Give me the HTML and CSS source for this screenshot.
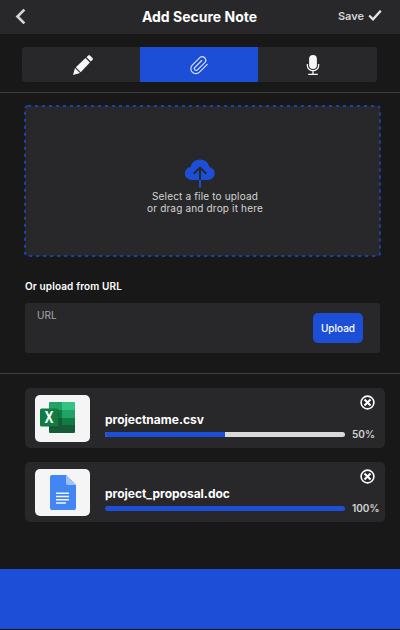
FILE: index.html
```html
<!DOCTYPE html>
<html lang="en">
<head>
<meta charset="utf-8">
<title>Add Secure Note</title>
<link rel="stylesheet" href="styles.css">
</head>
<body>
<header class="header">
  <button class="back" aria-label="Back"><svg width="11" height="18" viewBox="0 0 11 18"><path d="M9.4 1.6 2.5 8.5l6.9 6.9" fill="none" stroke="#d4d4d4" stroke-width="2.7"/></svg></button>
  <h1 class="title">Add Secure Note</h1>
  <button class="save"><span>Save</span><svg width="14" height="12" viewBox="0 0 14 12"><path d="M1.2 5.5 5 9.3l7.8-8.6" fill="none" stroke="#e5e5e5" stroke-width="2.3"/></svg></button>
</header>
<main>
  <section class="tabs-section">
    <nav class="tabs">
      <button class="tab" aria-label="Write"><svg width="22" height="22" viewBox="0 0 22 22"><g fill="#f5f5f5"><path d="M1 21 3 14.1 8 19Z"/><path d="M3.8 13.3 13.5 4.1 17.9 8.6 8.7 18.2Z"/><path d="M14.5 3.2 16.2 1.5q.9-.8 1.8.1l2.5 2.5q.9.9 0 1.8l-1.7 1.7Z"/></g></svg></button>
      <button class="tab tab-active" aria-label="Attach"><svg width="20" height="20" viewBox="0 0 20 20"><path d="m18.3 9.3-7.9 7.9a5 5 0 0 1-7.1-7.1l7.8-7.8a3.6 3.6 0 0 1 5 5l-7.6 7.6a1.8 1.8 0 0 1-2.6-2.6l6.8-6.8" fill="none" stroke="#dbe4fa" stroke-width="1.15" stroke-linecap="round" stroke-linejoin="round"/></svg></button>
      <button class="tab" aria-label="Record"><svg width="14" height="22" viewBox="0 0 14 22"><rect x="3.1" y="1" width="7.8" height="14" rx="3.9" fill="#f5f5f5"/><path d="M1.4 10v1.7a5.6 5 0 0 0 11.2 0V10M7 17v3M2.2 20.3h9.6" fill="none" stroke="#f5f5f5" stroke-width="1.3"/></svg></button>
    </nav>
  </section>
  <section class="upload-section">
    <div class="dropzone">
      <svg class="outline" width="357" height="152"><rect x="1" y="1" width="355" height="150" rx="3" fill="none" stroke="#1e40af" stroke-width="2" stroke-dasharray="3 4"/></svg>
      <svg class="cloud" width="30" height="29" viewBox="0 0 30 29"><path d="M7 21A7 6.6 0 0 1 5.6 7.9C6.4 3.5 10.2.4 15 .4c4.8 0 8.6 3.1 9.4 7.6A7 6.6 0 0 1 23 21Z" fill="#1d4ed8"/><path d="M15 21V8.6M8.7 14.9 15 8.6l6.3 6.3" fill="none" stroke="#27272a" stroke-width="2"/><path d="M15 21v7.5" stroke="#1d4ed8" stroke-width="2"/></svg>
      <p class="hint">Select a file to upload<br>or drag and drop it here</p>
    </div>
    <h2 class="subtitle">Or upload from URL</h2>
    <div class="url-box"><span class="url-label">URL</span><button class="upload">Upload</button></div>
  </section>
  <section class="files">
    <article class="file">
      <div class="thumb"><svg width="55" height="47" viewBox="0 0 55 47">
        <path d="M14 8q0-1 1-1h12v8H14Z" fill="#21a366"/><path d="M27 7h12q1 0 1 1v7H27Z" fill="#33c481"/>
        <path d="M14 15h13v8H14Z" fill="#107c41"/><path d="M27 15h13v8H27Z" fill="#21a366"/>
        <path d="M14 23h13v7H14Z" fill="#185c37"/><path d="M27 23h13v7H27Z" fill="#107c41"/>
        <path d="M14 30h26v7q0 1-1 1H15q-1 0-1-1Z" fill="#185c37"/>
        <path d="M14 15h8q2 0 2 2v15q0 1.5-1.5 1.5H14Z" fill="#0c4e2c" opacity=".4"/>
        <rect x="5" y="13.5" width="18.3" height="18" rx="1.5" fill="#107c41"/>
        <text class="excel-letter" transform="translate(14 28.1) scale(.86 1.08)" text-anchor="middle">X</text></svg></div>
      <div class="details">
        <span class="name">projectname.csv</span>
        <div class="progress"><div class="track"><div class="bar" style="width:50%"></div></div><span class="percent">50%</span></div>
      </div>
      <button class="remove" aria-label="Remove"><svg width="15" height="15" viewBox="0 0 15 15"><g fill="none" stroke="#fff"><circle cx="7.5" cy="7.5" r="6.4" stroke-width="1.6"/><path d="m4.5 4.5 6 6m0-6-6 6" stroke-width="2"/></g></svg></button>
    </article>
    <article class="file">
      <div class="thumb"><svg width="55" height="47" viewBox="0 0 55 47"><path d="M17 6h14l10 10v23q0 2-2 2H17q-2 0-2-2V8q0-2 2-2Z" fill="#4285f4"/><path d="M31 6l10 10h-8q-2 0-2-2Z" fill="#a1c2fa"/><path d="M21 24.2h13M21 27.5h13M21 30.8h13M21 34.1h10" stroke="#f1f5fd" stroke-width="1.5"/></svg></div>
      <div class="details">
        <span class="name">project_proposal.doc</span>
        <div class="progress"><div class="track"><div class="bar" style="width:100%"></div></div><span class="percent">100%</span></div>
      </div>
      <button class="remove" aria-label="Remove"><svg width="15" height="15" viewBox="0 0 15 15"><g fill="none" stroke="#fff"><circle cx="7.5" cy="7.5" r="6.4" stroke-width="1.6"/><path d="m4.5 4.5 6 6m0-6-6 6" stroke-width="2"/></g></svg></button>
    </article>
  </section>
</main>
<footer class="footer"></footer>
</body>
</html>
```
FILE: styles.css
```css
* { box-sizing: border-box; }
body {
  margin: 0;
  height: 630px;
  display: flex;
  flex-direction: column;
  background: #181818;
  color: #fff;
  font-family: Inter, "Liberation Sans", sans-serif;
  overflow: hidden;
}
button { border: 0; padding: 0; background: none; color: inherit; font: inherit; display: flex; align-items: center; }
svg { display: block; flex: none; }
h1, h2, p { margin: 0; }
main { flex: 1; }
.header {
  height: 34px;
  display: grid;
  grid-template-columns: 1fr auto 1fr;
  align-items: center;
  padding: 0 18px 0 17px;
  background: #28282a;
}
.back { justify-self: start; margin-left: -2px; }
.title { font-size: 14px; line-height: 18px; font-weight: 700; white-space: nowrap; }
.save { justify-self: end; gap: 4px; font-size: 11px; font-weight: 600; color: #d4d4d4; padding-bottom: 3px; }
.tabs-section { height: 59px; padding: 13px 23px 0 22px; border-bottom: 1px solid #404040; }
.tabs { display: grid; grid-template-columns: 118px 118px 119px; height: 35px; border-radius: 3px; overflow: hidden; background: #28282a; }
.tab { justify-content: center; }
.tab:first-child { padding-left: 4px; }
.tab:last-child { padding-right: 9px; }
.tab-active { background: #1d4ed8; }
.upload-section { height: 281px; padding: 12px 20px 0 24px; border-bottom: 1px solid #404040; }
.dropzone {
  position: relative;
  width: 357px;
  height: 152px;
  display: flex;
  flex-direction: column;
  align-items: center;
  padding: 54px 5px 0 0;
  border: 1px solid transparent;
  border-radius: 4px;
  background: #28282a;
  background-clip: padding-box;
}
.outline { position: absolute; inset: -1px; }
.cloud { margin-top: -1px; }
.hint { margin-top: 2px; padding-left: 10px; font-size: 10px; line-height: 12px; letter-spacing: .17px; color: #d4d4d4; text-align: center; }
.subtitle { margin: 22px 0 9px 1px; font-size: 10px; line-height: 15px; font-weight: 600; letter-spacing: .13px; }
.url-box { display: flex; justify-content: space-between; width: 355px; height: 50px; margin-left: 1px; padding: 10px 17px 10px 12px; border-radius: 3px; background: #28282a; }
.url-label { font-size: 10px; line-height: 12px; margin-top: -4px; color: #a8a8a8; }
.upload { width: 50px; height: 30px; justify-content: center; border-radius: 5px; background: #1d4ed8; font-size: 10px; font-weight: 500; }
.files { display: flex; flex-direction: column; gap: 14px; padding: 14px 15px 0 25px; }
.file { position: relative; display: flex; height: 60px; padding: 7px 6px 6px 10px; gap: 15px; border-radius: 5px; background: #28282a; }
.thumb { width: 55px; height: 47px; border-radius: 5px; background: #f5f5f5; flex: none; }
.excel-letter { font: 700 15px "Open Sans", sans-serif; fill: #fff; }
.details { padding-top: 17px; }
.name { display: block; font-size: 12px; line-height: 16px; font-weight: 700; }
.progress { display: flex; align-items: center; gap: 7px; height: 12px; }
.track { width: 240px; height: 5px; border-radius: 3px; overflow: hidden; background: #d9d9d9; }
.bar { height: 100%; background: #1d4ed8; }
.percent { font-size: 10px; line-height: 12px; font-weight: 600; color: #d4d4d4; }
.remove { position: absolute; top: 7px; right: 10px; }
.footer { height: 60px; margin-bottom: 1px; background: #1d4ed8; }
```
